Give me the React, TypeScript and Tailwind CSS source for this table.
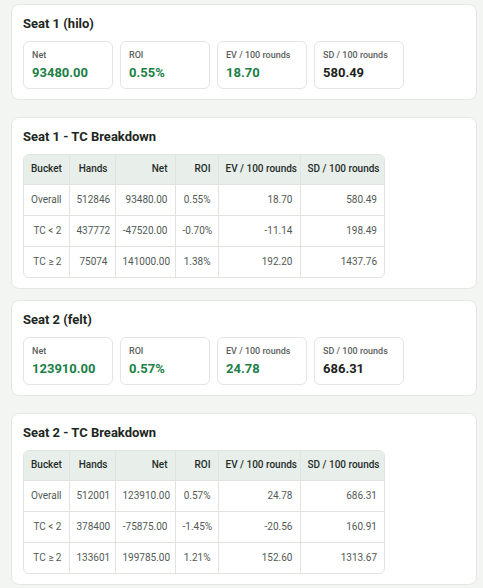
import React from 'react';

interface Stat {
  label: string;
  value: string;
  green?: boolean;
}

interface BucketRow {
  bucket: string;
  hands: string;
  net: string;
  roi: string;
  ev: string;
  sd: string;
}

const seat1Stats: Stat[] = [
  { label: 'Net', value: '93480.00', green: true },
  { label: 'ROI', value: '0.55%', green: true },
  { label: 'EV / 100 rounds', value: '18.70', green: true },
  { label: 'SD / 100 rounds', value: '580.49' },
];

const seat2Stats: Stat[] = [
  { label: 'Net', value: '123910.00', green: true },
  { label: 'ROI', value: '0.57%', green: true },
  { label: 'EV / 100 rounds', value: '24.78', green: true },
  { label: 'SD / 100 rounds', value: '686.31' },
];

const seat1Rows: BucketRow[] = [
  { bucket: 'Overall', hands: '512846', net: '93480.00', roi: '0.55%', ev: '18.70', sd: '580.49' },
  { bucket: 'TC < 2', hands: '437772', net: '-47520.00', roi: '-0.70%', ev: '-11.14', sd: '198.49' },
  { bucket: 'TC ≥ 2', hands: '75074', net: '141000.00', roi: '1.38%', ev: '192.20', sd: '1437.76' },
];

const seat2Rows: BucketRow[] = [
  { bucket: 'Overall', hands: '512001', net: '123910.00', roi: '0.57%', ev: '24.78', sd: '686.31' },
  { bucket: 'TC < 2', hands: '378400', net: '-75875.00', roi: '-1.45%', ev: '-20.56', sd: '160.91' },
  { bucket: 'TC ≥ 2', hands: '133601', net: '199785.00', roi: '1.21%', ev: '152.60', sd: '1313.67' },
];

function Card({ title, children, className = '' }: { title: string; children: React.ReactNode; className?: string }) {
  return (
    <div className={`ml-[11px] w-[466px] rounded-lg border border-[#e4e8e3] bg-white px-[11px] pt-[9px] pb-[10px] ${className}`}>
      <h2 className="mb-[7px] text-[13px] leading-[20px] font-bold text-[#1d2621]">{title}</h2>
      {children}
    </div>
  );
}

function StatGrid({ stats }: { stats: Stat[] }) {
  return (
    <div className="flex gap-[7px]">
      {stats.map(s => (
        <div key={s.label} className="h-[48px] w-[90px] rounded-md border border-[#e2e6e1] bg-white px-[8px] pt-[7px]">
          <div className="text-[9px] leading-[13px] font-medium whitespace-nowrap text-[#5b615d]">{s.label}</div>
          <div className={`mt-[2px] text-[13px] leading-[18px] font-bold ${s.green ? 'text-[#1b7f47]' : 'text-[#1d2320]'}`}>
            {s.value}
          </div>
        </div>
      ))}
    </div>
  );
}

function BreakdownTable({ rows }: { rows: BucketRow[] }) {
  const th = 'h-[29px] px-[7px] font-medium text-[#262d29] border-r border-[#dfe4de] text-right whitespace-nowrap';
  const td = 'h-[31px] px-[7px] text-[#525a55] border-r border-t border-[#dfe4de] text-right whitespace-nowrap';
  return (
    <div className="w-[362px] overflow-hidden rounded-md border border-[#dfe4de]">
      <table className="w-[360px] table-fixed border-collapse text-[10px] leading-[14px]">
        <colgroup>
          <col className="w-[45px]" />
          <col className="w-[46px]" />
          <col className="w-[60px]" />
          <col className="w-[43px]" />
          <col className="w-[82px]" />
          <col className="w-[84px]" />
        </colgroup>
        <thead>
          <tr className="bg-[#e8eee9]">
            <th className={`${th} text-left`}>Bucket</th>
            <th className={th}>Hands</th>
            <th className={th}>Net</th>
            <th className={th}>ROI</th>
            <th className={th}>EV / 100 rounds</th>
            <th className={`${th} border-r-0`}>SD / 100 rounds</th>
          </tr>
        </thead>
        <tbody>
          {rows.map(r => (
            <tr key={r.bucket}>
              <td className={`${td} text-left`}>{r.bucket}</td>
              <td className={td}>{r.hands}</td>
              <td className={td}>{r.net}</td>
              <td className={td}>{r.roi}</td>
              <td className={td}>{r.ev}</td>
              <td className={`${td} border-r-0`}>{r.sd}</td>
            </tr>
          ))}
        </tbody>
      </table>
    </div>
  );
}

export default function App() {
  return (
    <div className="min-h-[588px] w-[483px] bg-[#f3f5f2] pt-[4px] pb-[3px] font-['Roboto',sans-serif]">
      <Card title="Seat 1 (hilo)" className="mb-[17px]">
        <StatGrid stats={seat1Stats} />
      </Card>
      <Card title="Seat 1 - TC Breakdown" className="mb-[11px]">
        <BreakdownTable rows={seat1Rows} />
      </Card>
      <Card title="Seat 2 (felt)" className="mb-[17px]">
        <StatGrid stats={seat2Stats} />
      </Card>
      <Card title="Seat 2 - TC Breakdown">
        <BreakdownTable rows={seat2Rows} />
      </Card>
    </div>
  );
}
